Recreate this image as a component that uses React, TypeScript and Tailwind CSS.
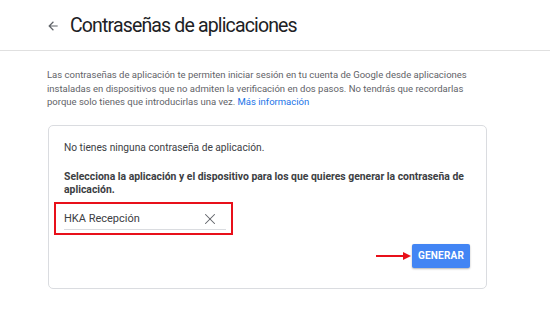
import { X } from "lucide-react"

export default function App() {
  return (
    <div className="w-[550px] h-[316px] bg-white overflow-hidden font-['Roboto',sans-serif]">
      <header className="h-[51px] border-b border-[#e0e0e0] flex items-center pl-[46px] pt-[2px]">
        <svg width="14" height="14" viewBox="0 0 24 24" className="text-[#5f6368]">
          <path d="M20 11H7.83l5.59-5.59L12 4l-8 8 8 8 1.41-1.41L7.83 13H20v-2z" fill="currentColor" />
        </svg>
        <h1 className="ml-[10px] text-[19.5px] leading-none text-[#202124] tracking-[-0.85px]">
          Contraseñas de aplicaciones
        </h1>
      </header>

      <div className="pl-[47px] pr-[50px] pt-[17px]">
        <p className="w-[440px] text-[9.5px] leading-[13.5px] text-[#5f6368]">
          Las contraseñas de aplicación te permiten iniciar sesión en tu cuenta de Google desde aplicaciones
          instaladas en dispositivos que no admiten la verificación en dos pasos. No tendrás que recordarlas
          porque solo tienes que introducirlas una vez.{" "}
          <a className="text-[#1a73e8]">Más información</a>
        </p>

        <div className="mt-[16px] ml-[1px] w-[439px] h-[164px] border border-[#dadce0] rounded-[5px] pt-[15px]">
          <p className="pl-[15px] text-[10.2px] leading-[13px] text-[#3c4043]">
            No tienes ninguna contraseña de aplicación.
          </p>
          <p className="pl-[15px] w-[415px] mt-[16px] text-[10.4px] leading-[13.5px] font-bold text-[#3c4043]">
            Selecciona la aplicación y el dispositivo para los que quieres generar la contraseña de aplicación.
          </p>

          <div className="mt-[5px] ml-[5px] w-[179px] h-[33px] border-2 border-[#e8101a] pl-[8px] pr-[5px] pt-[6px]">
            <div className="flex items-center justify-between border-b border-[#dadce0] h-[20px] pr-[7px]">
              <span className="text-[11px] text-[#3c4043]">HKA Recepción</span>
              <X size={18} strokeWidth={1.4} className="text-[#5f6368]" />
            </div>
          </div>

          <div className="flex justify-end items-center pr-[16px] mt-[9px]">
            <div className="flex items-center mr-[1px]">
              <div className="w-[27px] h-[2px] bg-[#e8101a]" />
              <svg width="8" height="8" viewBox="0 0 8 8">
                <path d="M0 0L8 4L0 8z" fill="#e8101a" />
              </svg>
            </div>
            <button className="w-[58px] h-[24px] bg-[#4285f4] rounded-[2px] shadow-[0_1px_2px_rgba(0,0,0,0.3)] text-white text-[10px] font-bold tracking-[0.2px]">
              GENERAR
            </button>
          </div>
        </div>
      </div>
    </div>
  )
}
